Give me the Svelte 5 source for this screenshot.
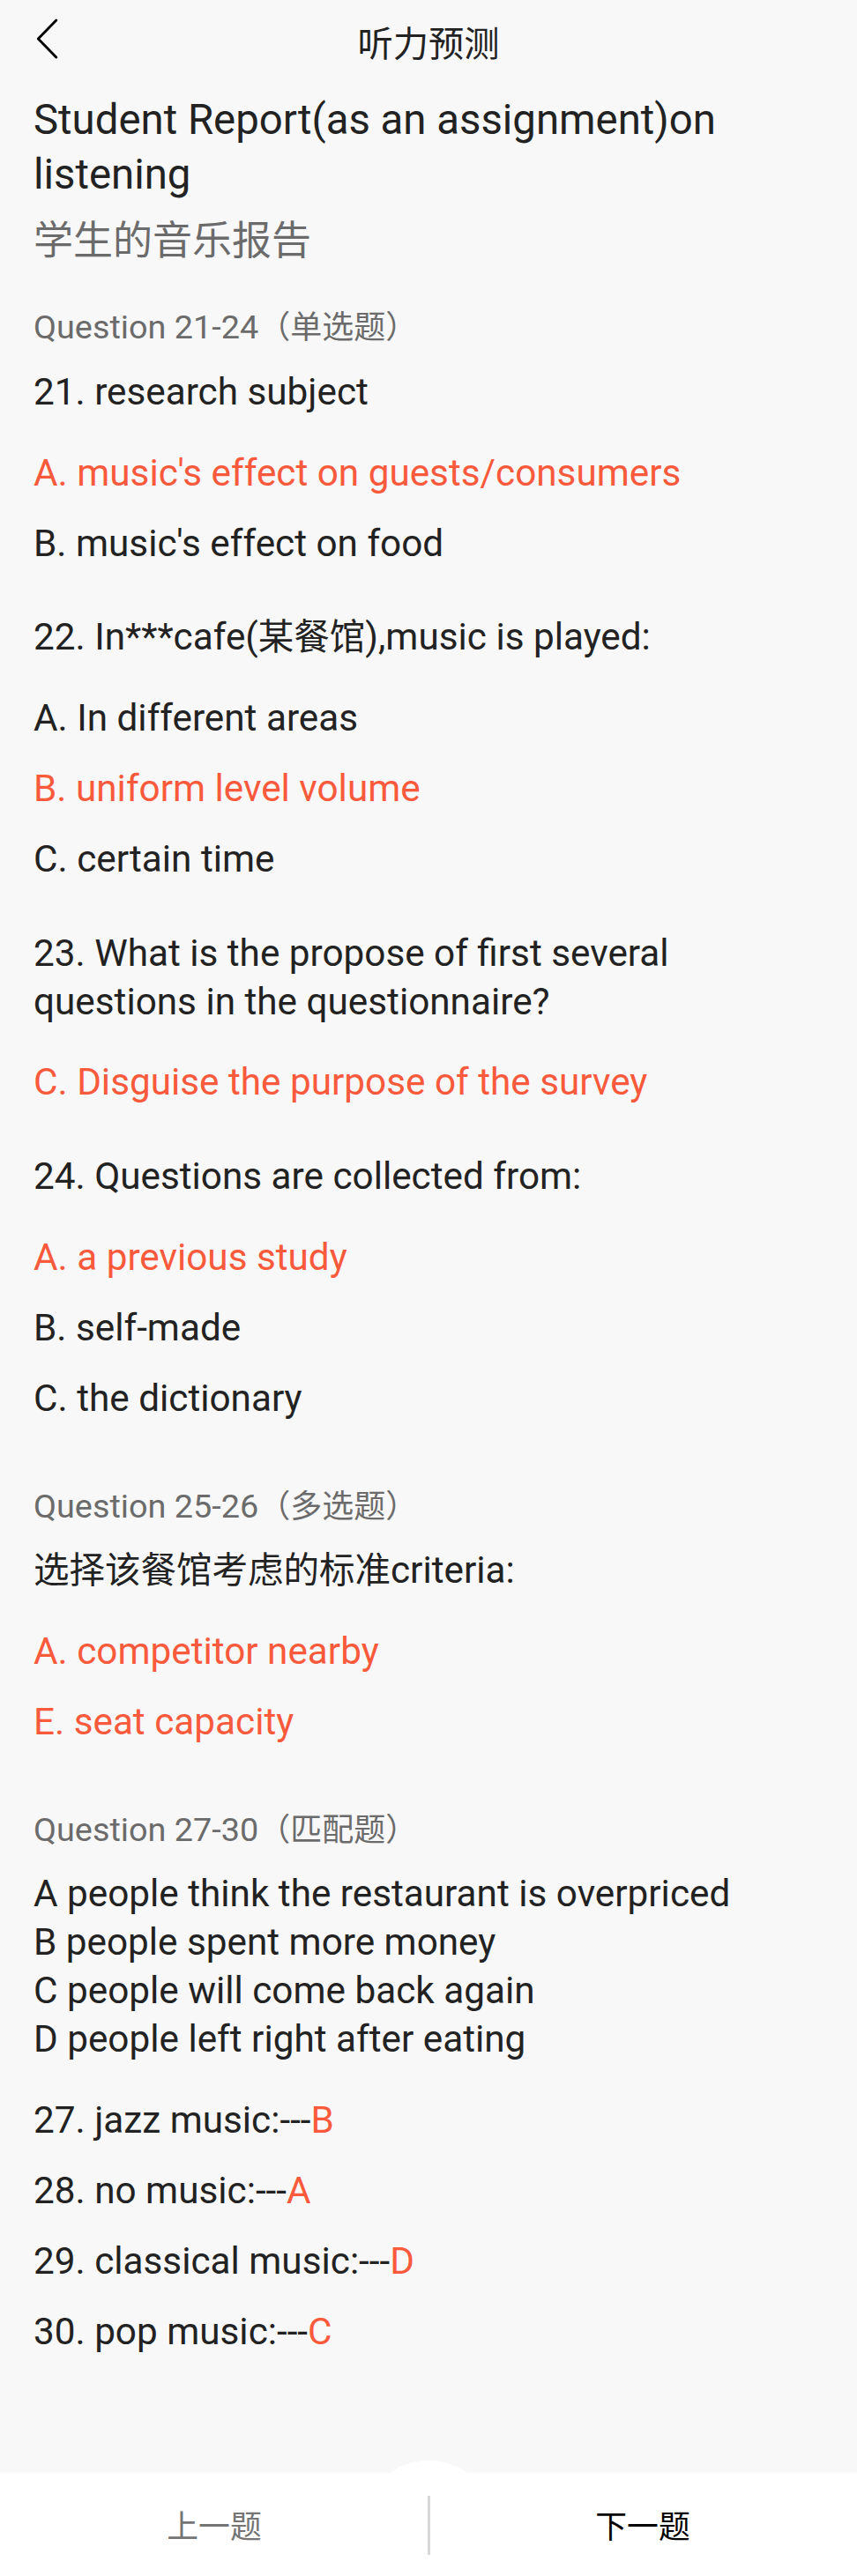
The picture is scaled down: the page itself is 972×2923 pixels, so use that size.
<script lang="ts">
  interface Item {
    stem: string[];
    options?: { text: string; correct?: boolean }[];
    matches?: { text: string; answer: string }[];
  }

  interface Section {
    label: string;
    items: Item[];
  }

  const sections: Section[] = [
    {
      label: 'Question 21-24（单选题）',
      items: [
        {
          stem: ['21. research subject'],
          options: [
            { text: "A. music's effect on guests/consumers", correct: true },
            { text: "B. music's effect on food" },
          ],
        },
        {
          stem: ['22. In***cafe(某餐馆),music is played:'],
          options: [
            { text: 'A. In different areas' },
            { text: 'B. uniform level volume', correct: true },
            { text: 'C. certain time' },
          ],
        },
        {
          stem: ['23. What is the propose of first several questions in the questionnaire?'],
          options: [{ text: 'C. Disguise the purpose of the survey', correct: true }],
        },
        {
          stem: ['24. Questions are collected from:'],
          options: [
            { text: 'A. a previous study', correct: true },
            { text: 'B. self-made' },
            { text: 'C. the dictionary' },
          ],
        },
      ],
    },
    {
      label: 'Question 25-26（多选题）',
      items: [
        {
          stem: ['选择该餐馆考虑的标准criteria:'],
          options: [
            { text: 'A. competitor nearby', correct: true },
            { text: 'E. seat capacity', correct: true },
          ],
        },
      ],
    },
    {
      label: 'Question 27-30（匹配题）',
      items: [
        {
          stem: [
            'A people think the restaurant is overpriced',
            'B people spent more money',
            'C people will come back again',
            'D people left right after eating',
          ],
          matches: [
            { text: '27. jazz music:---', answer: 'B' },
            { text: '28. no music:---', answer: 'A' },
            { text: '29. classical music:---', answer: 'D' },
            { text: '30. pop music:---', answer: 'C' },
          ],
        },
      ],
    },
  ];

  const HAN = /([\u3000-\u9fff\uff00-\uffef]+)/;

  // Split a line into Latin and Chinese runs, the Chinese ones are set a bit smaller
  function runs(text: string) {
    return text
      .split(HAN)
      .filter(Boolean)
      .map((part) => ({ part, han: HAN.test(part) }));
  }
</script>

{#snippet mixed(text: string)}
  {#each runs(text) as run}<span class:han={run.han}>{run.part}</span>{/each}
{/snippet}

<div class="page">
  <header class="topbar">
    <button class="back" aria-label="返回">
      <svg width="28" height="48" viewBox="0 0 28 48" fill="none">
        <path
          d="M25.8 3 L5.3 24 L25.8 45"
          stroke="#000"
          stroke-width="2.9"
          stroke-linecap="round"
          stroke-linejoin="round"
        />
      </svg>
    </button>
    <span class="topbar-title">听力预测</span>
  </header>

  <main class="content">
    <h1 class="title">Student Report(as an assignment)on listening</h1>
    <p class="subtitle">学生的音乐报告</p>

    {#each sections as section}
      <section class="section">
        <h2 class="label">{@render mixed(section.label)}</h2>
        {#each section.items as item}
          <div class="item">
            <div class="stem">
              {#each item.stem as line}
                <p>{@render mixed(line)}</p>
              {/each}
            </div>
            <ul class="options">
              {#each item.options ?? [] as option}
                <li class:correct={option.correct}>{option.text}</li>
              {/each}
              {#each item.matches ?? [] as match}
                <li>{match.text}<span class="correct">{match.answer}</span></li>
              {/each}
            </ul>
          </div>
        {/each}
      </section>
    {/each}
  </main>

  <footer class="footer">
    <button class="nav prev">上一题</button>
    <span class="divider"></span>
    <button class="nav next">下一题</button>
  </footer>
</div>

<style>
  :global(body) {
    background: #f8f8f8;
  }

  .page {
    display: flex;
    flex-direction: column;
    box-sizing: border-box;
    height: 2923px;
    background: #f8f8f8;
    color: #222;
    font-family: Roboto, 'Noto Sans CJK SC', sans-serif;
  }

  h1,
  h2,
  p,
  ul {
    margin: 0;
    padding: 0;
    font-weight: 400;
    list-style: none;
  }

  button {
    padding: 0;
    border: none;
    background: none;
    font: inherit;
  }

  /* Top bar */
  .topbar {
    display: grid;
    grid-template-columns: 80px 1fr 80px;
    align-items: center;
    height: 88px;
    padding: 0 38px;
  }

  .back {
    display: flex;
  }

  .topbar-title {
    padding-top: 14px;
    font-size: 40.3px;
    line-height: 56px;
    text-align: center;
  }

  /* Content */
  .content {
    flex: 1;
    padding: 17.2px 38px 0;
  }

  .title {
    font-size: 47.35px;
    line-height: 62px;
  }

  .subtitle {
    margin: 13.4px 0 42.9px;
    color: #6b6b6b;
    font-size: 45px;
    line-height: 62px;
  }

  .section + .section {
    margin-top: 70.8px;
  }

  .label {
    margin-bottom: 21.5px;
    color: #6b6b6b;
    font-size: 37.8px;
    line-height: 48px;
  }

  .label .han {
    font-size: 36px;
    line-height: 1;
  }

  .item + .item {
    margin-top: 51.7px;
  }

  .stem,
  .options {
    font-size: 42.27px;
    line-height: 55px;
  }

  .stem .han {
    font-size: 40.5px;
    line-height: 1;
  }

  .options {
    display: flex;
    flex-direction: column;
    gap: 25px;
    margin-top: 36.7px;
  }

  .correct {
    color: #fa5a3c;
  }

  /* Footer */
  .footer {
    position: relative;
    display: flex;
    align-items: center;
    height: 117px;
    background: #fff;
  }

  .footer::before {
    content: '';
    position: absolute;
    top: -14px;
    left: 50%;
    width: 152px;
    height: 131px;
    border-radius: 76px 76px 0 0;
    background: #fff;
    transform: translateX(-50%);
  }

  .nav {
    position: relative;
    flex: 1;
    padding-top: 6px;
    font-size: 35.8px;
    line-height: 48px;
  }

  .prev {
    color: #757575;
  }

  .next {
    color: #000;
  }

  .divider {
    position: relative;
    width: 3px;
    height: 67px;
    margin: 2px -2px 0 -1px;
    background: #d8d8d8;
  }
</style>
